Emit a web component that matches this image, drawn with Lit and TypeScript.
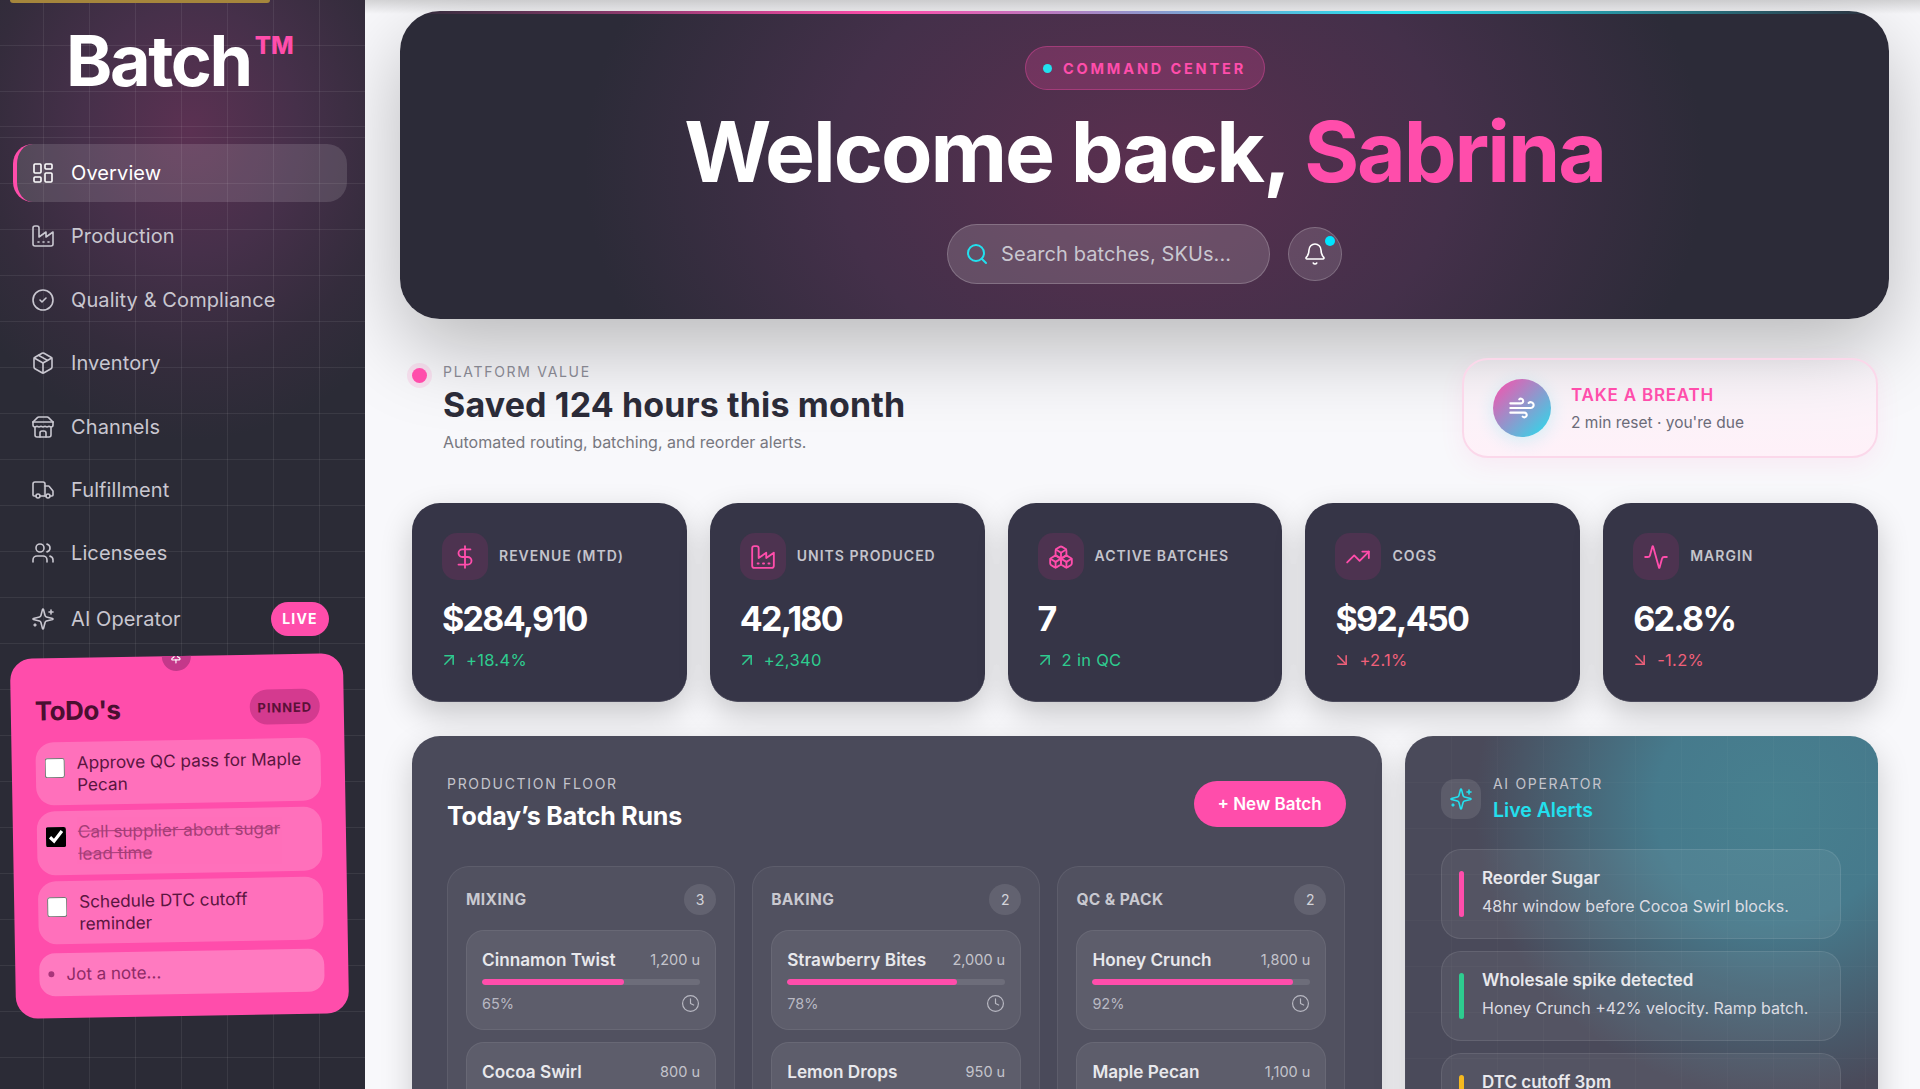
import { LitElement, html, css, svg } from "lit";
import { customElement } from "lit/decorators.js";

const I: Record<string, any> = {
  dash: svg`<rect x="3" y="3" width="7" height="9" rx="1"/><rect x="14" y="3" width="7" height="5" rx="1"/><rect x="14" y="12" width="7" height="9" rx="1"/><rect x="3" y="16" width="7" height="5" rx="1"/>`,
  factory: svg`<path d="M2 20a2 2 0 0 0 2 2h16a2 2 0 0 0 2-2V8l-7 5V8l-7 5V4a2 2 0 0 0-2-2H4a2 2 0 0 0-2 2Z"/><path d="M17 18h1"/><path d="M12 18h1"/><path d="M7 18h1"/>`,
  check: svg`<circle cx="12" cy="12" r="10"/><path d="m9 12 2 2 4-4"/>`,
  box: svg`<path d="M21 8a2 2 0 0 0-1-1.73l-7-4a2 2 0 0 0-2 0l-7 4A2 2 0 0 0 3 8v8a2 2 0 0 0 1 1.73l7 4a2 2 0 0 0 2 0l7-4A2 2 0 0 0 21 16Z"/><path d="m3.3 7 8.7 5 8.7-5"/><path d="M12 22V12"/><path d="m7.5 4.27 9 5.15"/>`,
  store: svg`<path d="m2 7 4.41-4.41A2 2 0 0 1 7.83 2h8.34a2 2 0 0 1 1.42.59L22 7"/><path d="M4 12v8a2 2 0 0 0 2 2h12a2 2 0 0 0 2-2v-8"/><path d="M15 22v-4a2 2 0 0 0-2-2h-2a2 2 0 0 0-2 2v4"/><path d="M2 7h20"/><path d="M22 7v3a2 2 0 0 1-2 2a2.7 2.7 0 0 1-1.59-.63.7.7 0 0 0-.82 0A2.7 2.7 0 0 1 16 12a2.7 2.7 0 0 1-1.59-.63.7.7 0 0 0-.82 0A2.7 2.7 0 0 1 12 12a2.7 2.7 0 0 1-1.59-.63.7.7 0 0 0-.82 0A2.7 2.7 0 0 1 8 12a2.7 2.7 0 0 1-1.59-.63.7.7 0 0 0-.82 0A2.7 2.7 0 0 1 4 12a2 2 0 0 1-2-2V7"/>`,
  truck: svg`<path d="M14 18V6a2 2 0 0 0-2-2H4a2 2 0 0 0-2 2v11a1 1 0 0 0 1 1h2"/><path d="M15 18H9"/><path d="M19 18h2a1 1 0 0 0 1-1v-3.65a1 1 0 0 0-.22-.624l-3.48-4.35A1 1 0 0 0 17.52 8H14"/><circle cx="17" cy="18" r="2"/><circle cx="7" cy="18" r="2"/>`,
  users: svg`<path d="M16 21v-2a4 4 0 0 0-4-4H6a4 4 0 0 0-4 4v2"/><circle cx="9" cy="7" r="4"/><path d="M22 21v-2a4 4 0 0 0-3-3.87"/><path d="M16 3.13a4 4 0 0 1 0 7.75"/>`,
  spark: svg`<path d="M9.937 15.5A2 2 0 0 0 8.5 14.063l-6.135-1.582a.5.5 0 0 1 0-.962L8.5 9.936A2 2 0 0 0 9.937 8.5l1.582-6.135a.5.5 0 0 1 .963 0L14.063 8.5A2 2 0 0 0 15.5 9.937l6.135 1.581a.5.5 0 0 1 0 .964L15.5 14.063a2 2 0 0 0-1.437 1.437l-1.582 6.135a.5.5 0 0 1-.963 0z"/><path d="M20 3v4"/><path d="M22 5h-4"/><path d="M4 17v2"/><path d="M5 18H3"/>`,
  search: svg`<circle cx="11" cy="11" r="8"/><path d="m21 21-4.3-4.3"/>`,
  bell: svg`<path d="M10.268 21a2 2 0 0 0 3.464 0"/><path d="M3.262 15.326A1 1 0 0 0 4 17h16a1 1 0 0 0 .74-1.673C19.41 13.956 18 12.499 18 8A6 6 0 0 0 6 8c0 4.499-1.411 5.956-2.738 7.326"/>`,
  wind: svg`<path d="M17.7 7.7a2.5 2.5 0 1 1 1.8 4.3H2"/><path d="M9.6 4.6A2 2 0 1 1 11 8H2"/><path d="M12.6 19.4A2 2 0 1 0 14 16H2"/>`,
  dollar: svg`<line x1="12" x2="12" y1="2" y2="22"/><path d="M17 5H9.5a3.5 3.5 0 0 0 0 7h5a3.5 3.5 0 0 1 0 7H6"/>`,
  boxes: svg`<path d="M2.97 12.92A2 2 0 0 0 2 14.63v3.24a2 2 0 0 0 .97 1.71l3 1.8a2 2 0 0 0 2.06 0L12 19v-5.5l-5-3-4.03 2.42Z"/><path d="m7 16.5-4.74-2.85"/><path d="m7 16.5 5-3"/><path d="M7 16.5v5.17"/><path d="M12 13.5V19l3.97 2.38a2 2 0 0 0 2.06 0l3-1.8a2 2 0 0 0 .97-1.71v-3.24a2 2 0 0 0-.97-1.71L17 10.5l-5 3Z"/><path d="m17 16.5-5-3"/><path d="m17 16.5 4.74-2.85"/><path d="M17 16.5v5.17"/><path d="M7.97 4.42A2 2 0 0 0 7 6.13v4.37l5 3 5-3V6.13a2 2 0 0 0-.97-1.71l-3-1.8a2 2 0 0 0-2.06 0l-3 1.8Z"/><path d="M12 8 7.26 5.15"/><path d="m12 8 4.74-2.85"/><path d="M12 13.5V8"/>`,
  trend: svg`<path d="M16 7h6v6"/><path d="m22 7-8.5 8.5-5-5L2 17"/>`,
  activity: svg`<path d="M22 12h-2.48a2 2 0 0 0-1.93 1.46l-2.35 8.36a.25.25 0 0 1-.48 0L9.24 2.18a.25.25 0 0 0-.48 0l-2.35 8.36A2 2 0 0 1 4.49 12H2"/>`,
  up: svg`<path d="M7 7h10v10"/><path d="M7 17 17 7"/>`,
  down: svg`<path d="m7 7 10 10"/><path d="M17 7v10H7"/>`,
  clock: svg`<circle cx="12" cy="12" r="10"/><polyline points="12 6 12 12 16 14"/>`,
  pin: svg`<path d="M12 17v5"/><path d="M9 10.76a2 2 0 0 1-1.11 1.79l-1.78.9A2 2 0 0 0 5 15.24V16a1 1 0 0 0 1 1h12a1 1 0 0 0 1-1v-.76a2 2 0 0 0-1.11-1.79l-1.78-.9A2 2 0 0 1 15 10.76V7a1 1 0 0 1 1-1 2 2 0 0 0 0-4H8a2 2 0 0 0 0 4 1 1 0 0 1 1 1z"/>`,
};
const icon = (n: string, c = "ic") => html`<svg class=${c} viewBox="0 0 24 24" fill="none" stroke="currentColor" stroke-linecap="round" stroke-linejoin="round">${I[n]}</svg>`;

const NAV = [
  ["dash", "Overview"], ["factory", "Production"], ["check", "Quality & Compliance"], ["box", "Inventory"],
  ["store", "Channels"], ["truck", "Fulfillment"], ["users", "Licensees"], ["spark", "AI Operator"],
];
const STATS = [
  ["dollar", "REVENUE (MTD)", "$284,910", "+18.4%", true],
  ["factory", "UNITS PRODUCED", "42,180", "+2,340", true],
  ["boxes", "ACTIVE BATCHES", "7", "2 in QC", true],
  ["trend", "COGS", "$92,450", "+2.1%", false],
  ["activity", "MARGIN", "62.8%", "-1.2%", false],
] as const;
const COLS = [
  { t: "MIXING", n: 3, a: ["Cinnamon Twist", "1,200 u", 65], b: ["Cocoa Swirl", "800 u"] },
  { t: "BAKING", n: 2, a: ["Strawberry Bites", "2,000 u", 78], b: ["Lemon Drops", "950 u"] },
  { t: "QC & PACK", n: 2, a: ["Honey Crunch", "1,800 u", 92], b: ["Maple Pecan", "1,100 u"] },
] as const;
const ALERTS = [
  ["#ff4dab", "Reorder Sugar", "48hr window before Cocoa Swirl blocks."],
  ["#2ecc8f", "Wholesale spike detected", "Honey Crunch +42% velocity. Ramp batch."],
  ["#f5b91f", "DTC cutoff 3pm", ""],
];

@customElement("app-root")
export class AppRoot extends LitElement {
  static styles = css`
    :host { display: flex; width: 1920px; height: 1089px; overflow: hidden; background: #f8f8fb; font-family: Inter, "Liberation Sans", sans-serif; color: #2b2b38; }
    * { box-sizing: border-box; }
    .ic { width: 24px; height: 24px; stroke-width: 1.6; flex: none; display: block; }

    .side { width: 365px; flex: none; height: 1089px; position: relative; display: flex; flex-direction: column; color: #fff;
      background:
        linear-gradient(rgba(255,255,255,.07) 1px, transparent 1px) 0 -1px / 46px 46px,
        linear-gradient(90deg, rgba(255,255,255,.07) 1px, transparent 1px) -3px 0 / 46px 46px,
        radial-gradient(ellipse 270px 310px at 190px 130px, #5b3152 0%, #46304a 40%, #342c3c 75%, #2b2b36 100%), #2b2b36; }
    .strip { position: absolute; left: 10px; top: 0; width: 260px; height: 3px; background: #a5863c; border-radius: 0 0 4px 4px; }
    .logo { height: 127px; flex: none; padding-top: 21px; padding-left: 66px; font-size: 70px; line-height: 80px; font-weight: 700; letter-spacing: -2.4px; border-bottom: 1px solid rgba(255,255,255,.07); display: flex; align-items: flex-start; }
    .logo sup { font-size: 24px; line-height: 24px; color: #ff4dab; letter-spacing: 0; margin: 13px 0 0 4px; font-weight: 800; vertical-align: baseline; }
    nav { display: flex; flex-direction: column; gap: 5.4px; margin-top: 17px; padding: 0 18px 0 13px; }
    .item { height: 58px; display: flex; align-items: center; padding: 0 18px 0 18px; border-radius: 20px; font-size: 20px; letter-spacing: .1px; color: #c9c7d0; border-left: 4px solid transparent; gap: 16px; }
    .item .ic { margin-left: -4px; }
    .item.on { background: rgba(255,255,255,.13); color: #fff; border-left-color: #ff4dab; }
    .item.last { height: 62px; padding-right: 18px; }
    .live { margin-left: auto; width: 58px; height: 34px; border-radius: 17px; background: #ff4dab; color: #fff; font-size: 14px; font-weight: 700; letter-spacing: 1.2px; display: flex; align-items: center; justify-content: center; }

    .note { position: relative; overflow: hidden; width: 333px; height: 360px; margin: 6.5px 0 0 13px; transform: rotate(-1deg); background: #ff4dab; border-radius: 22px; padding: 35px 24px 0; color: #4a0f30; flex: none; }
    .pin { position: absolute; left: 151.5px; top: -14px; width: 29px; height: 29px; border-radius: 50%; background: #c4388a; color: #fff; display: flex; align-items: center; justify-content: center; }
    .pin .ic { width: 14px; height: 14px; stroke-width: 2; }
    .nh { height: 35px; display: flex; align-items: center; justify-content: space-between; margin-bottom: 13.5px; }
    .nh b { font-size: 26px; font-weight: 700; letter-spacing: -.5px; }
    .pinned { width: 70px; height: 35px; border-radius: 18px; background: #d43a8f; font-size: 13px; font-weight: 700; letter-spacing: .9px; display: flex; align-items: center; justify-content: center; color: #5a1138; }
    .todo { display: flex; gap: 12px; height: 63.5px; padding: 10px 9px; background: #ff70bb; border-radius: 18px; margin-bottom: 6px; font-size: 17.2px; line-height: 22.3px; color: #5a1540; }
    .todo input { width: 20px; height: 20px; margin: 6px 0 0; flex: none; accent-color: #000; }
    .todo.done span { text-decoration: line-through; opacity: .55; }
    .jot { height: 43px; margin-top: 8.5px; border-radius: 16px; background: #ff7ac0; display: flex; align-items: center; padding-left: 9px; gap: 12px; color: #8e2a66; font-size: 17px; }
    .jot i { width: 6px; height: 6px; border-radius: 50%; background: #a8357a; }

    main { flex: 1; min-width: 0; padding: 11px 42px 0 47px; background: linear-gradient(#d4d4d6, rgba(212,212,214,0) 14px); }
    .heroWrap { border-radius: 40px; margin: 0 -11px 0 -12px; box-shadow: 0 30px 80px rgba(0,0,0,.25); }
    .hero { position: relative; height: 308px; border-radius: 40px; overflow: hidden; text-align: center; display: flex; flex-direction: column; align-items: center; padding-top: 35px;
      background: radial-gradient(ellipse 560px 400px at 50% 50%, #5a2f4f 0%, #44304a 55%, #2c2b38 100%); color: #fff; }
    .hero::before { content: ""; position: absolute; left: 0; right: 0; top: 0; height: 3px; background: linear-gradient(90deg, transparent 0%, #ff4dab 33%, #22e0ee 67%, transparent 100%); }
    .chip { height: 44px; width: 240px; border-radius: 22px; background: rgba(255,77,171,.2); border: 1px solid rgba(255,77,171,.35); display: flex; align-items: center; justify-content: center; gap: 11px; color: #ff4dab; font-size: 14.5px; font-weight: 700; letter-spacing: 2.85px; }
    .chip i { width: 9px; height: 9px; border-radius: 50%; background: #22e0ee; }
    h1 { margin: 12px 0 0; font-size: 84px; line-height: 100px; font-weight: 700; letter-spacing: -2.1px; }
    h1 span { color: #ff4dab; }
    .tools { display: flex; align-items: center; gap: 18px; margin-top: 22px; }
    .search { width: 323px; height: 60px; border-radius: 30px; background: rgba(255,255,255,.15); border: 1px solid rgba(255,255,255,.2); display: flex; align-items: center; padding-left: 17px; gap: 12px; color: #c9c7d0; font-size: 20px; letter-spacing: .1px; }
    .search .ic { color: #22e0ee; stroke-width: 2; }
    .bell { position: relative; width: 54px; height: 54px; border-radius: 50%; background: rgba(255,255,255,.13); border: 1px solid rgba(255,255,255,.2); display: flex; align-items: center; justify-content: center; }
    .bell b { position: absolute; right: 6px; top: 8px; width: 10px; height: 10px; border-radius: 50%; background: #00e5ff; }

    .value { display: flex; justify-content: space-between; margin-top: 39px; height: 100px; }
    .vl { position: relative; padding: 5px 0 0 31px; }
    .vl > i { position: absolute; left: 0; top: 10px; width: 15px; height: 15px; border-radius: 50%; background: #ff4dab; box-shadow: 0 0 0 5px rgba(255,77,171,.13); }
    .eye { font-size: 14px; letter-spacing: 1.7px; line-height: 18px; color: #85858f; }
    .vl h2 { margin: 3px 0 0; font-size: 34px; line-height: 42px; font-weight: 700; letter-spacing: .15px; color: #2b2b38; }
    .vl p { margin: 6px 0 0; font-size: 16px; line-height: 20px; color: #77777f; }
    .breath { width: 416px; height: 100px; border-radius: 26px; border: 2px solid #fbd8ea; background: linear-gradient(180deg, rgba(255,200,230,.06), rgba(255,240,248,.85) 90%); box-shadow: 0 8px 24px rgba(255,77,171,.08); display: flex; align-items: center; padding-left: 29px; gap: 20px; }
    .circ { width: 58px; height: 58px; border-radius: 50%; background: linear-gradient(135deg, #ff4dab, #22e0ee); color: #fff; display: flex; align-items: center; justify-content: center; box-shadow: 0 4px 18px rgba(34,224,238,.2); }
    .circ .ic { width: 28px; height: 28px; stroke-width: 1.8; }
    .breath b { display: block; color: #ff4dab; font-size: 17px; font-weight: 600; letter-spacing: .8px; line-height: 22px; }
    .breath span { display: block; margin-top: 7px; font-size: 15.5px; color: #6b6b78; }

    .stats { display: grid; grid-template-columns: repeat(5, 1fr); gap: 23px; margin-top: 45px; }
    .stat { height: 199px; background: #363547; border-radius: 28px; padding: 30px; box-shadow: 0 12px 32px rgba(0,0,0,.2); border-bottom: 1px solid #4c4b5c; color: #fff; }
    .sh { display: flex; align-items: center; gap: 11px; height: 47px; }
    .si { width: 46px; height: 47px; border-radius: 15px; background: #4d3350; color: #ff4dab; display: flex; align-items: center; justify-content: center; }
    .si .ic { width: 26px; height: 26px; stroke-width: 1.7; }
    .sh span { font-size: 14px; font-weight: 600; letter-spacing: 1px; color: #c4c4cc; margin-bottom: 2px; }
    .sv { margin-top: 17px; font-size: 34px; line-height: 44px; font-weight: 700; letter-spacing: -1.7px; }
    .sd { display: flex; align-items: center; gap: 7px; height: 24px; margin-top: 7px; font-size: 16.5px; letter-spacing: .3px; }
    .sd .ic { width: 20px; height: 20px; stroke-width: 1.8; margin-left: -3px; }
    .sd.g { color: #2ecc8f; } .sd.r { color: #f0607a; }

    .floor { display: grid; grid-template-columns: 970px 473px; gap: 23px; margin-top: 34px; }
    .panel { height: 400px; border-radius: 28px; background: #4a4a5a; padding: 36px 35px; color: #fff; box-shadow: 0 12px 32px rgba(0,0,0,.18); }
    .ph { display: flex; justify-content: space-between; align-items: flex-start; height: 94px; }
    .panel .eye { color: #c4c4cc; line-height: 24px; }
    .ph h3 { margin: 3px 0 0; font-size: 25px; line-height: 34px; font-weight: 700; letter-spacing: -.2px; }
    .btn { margin: 9px 1.5px 0 0; width: 152px; height: 46px; border-radius: 23px; background: #ff4dab; display: flex; align-items: center; justify-content: center; font-size: 17px; font-weight: 600; }
    .cols { display: grid; grid-template-columns: 288px 288px 288px; gap: 17.2px; }
    .col { height: 300px; padding: 18px; border-radius: 22px; background: rgba(255,255,255,.04); border: 1px solid rgba(255,255,255,.07); }
    .ch { display: flex; align-items: center; justify-content: space-between; height: 31px; margin-bottom: 15px; margin-top: -1px; }
    .ch b { font-size: 15.5px; letter-spacing: .4px; font-weight: 700; color: #c9c9d0; }
    .ch span { width: 32px; height: 31px; border-radius: 50%; background: rgba(255,255,255,.1); font-size: 14px; color: #d4d4da; display: flex; align-items: center; justify-content: center; }
    .card { height: 100px; padding: 15px 15px 0; border-radius: 18px; margin-bottom: 12px; background: rgba(255,255,255,.07); border: 1px solid rgba(255,255,255,.07); }
    .cr { display: flex; justify-content: space-between; align-items: center; height: 26px; }
    .cr b { font-size: 17.2px; font-weight: 600; color: #e8e8ec; }
    .cr span { font-size: 14.5px; color: #c4c4cc; }
    .bar { height: 6px; margin-top: 7px; border-radius: 3px; background: rgba(255,255,255,.1); overflow: hidden; }
    .bar i { display: block; height: 100%; border-radius: 3px; background: #ff4dab; }
    .cf { display: flex; justify-content: space-between; align-items: center; margin-top: 9px; font-size: 14.5px; color: #b8b8c2; }
    .cf .ic { width: 19px; height: 19px; stroke-width: 1.5; }

    .alerts { background:
      linear-gradient(rgba(255,255,255,.018) 1px, transparent 1px) 0 0 / 46px 46px,
      linear-gradient(90deg, rgba(255,255,255,.018) 1px, transparent 1px) 0 0 / 46px 46px,
      radial-gradient(ellipse 300px 290px at 370px 70px, #47808f 0%, #467a8c 40%, #4a4a5a 100%), #4a4a5a; padding: 36px; }
    .ah { display: flex; gap: 12px; height: 77px; }
    .ai { width: 40px; height: 40px; margin-top: 7px; border-radius: 14px; background: rgba(255,255,255,.1); color: #22e0ee; display: flex; align-items: center; justify-content: center; }
    .ai .ic { width: 24px; height: 24px; }
    .ah h3 { margin: -1px 0 0; font-size: 19.5px; font-weight: 600; line-height: 30px; color: #22e0ee; }
    .al { height: 90px; width: 400px; margin-bottom: 12px; display: flex; gap: 18px; padding: 21px 17px; border-radius: 20px; background: rgba(255,255,255,.06); border: 1px solid rgba(255,255,255,.09); }
    .al > i { width: 5px; height: 46px; border-radius: 3px; flex: none; }
    .al > div { margin-top: -2.5px; }
    .al b { display: block; font-size: 17px; font-weight: 600; line-height: 18px; color: #e8e8ec; }
    .al span { display: block; margin-top: 10px; font-size: 16px; line-height: 18px; color: #dcdce2; }
  `;

  render() {
    return html`
      <aside class="side">
        <div class="strip"></div>
        <div class="logo">Batch<sup>TM</sup></div>
        <nav>
          ${NAV.map(([ic, t], i) => html`
            <div class="item ${i === 0 ? "on" : ""} ${i === 7 ? "last" : ""}">
              ${icon(ic)}<span>${t}</span>${i === 7 ? html`<span class="live">LIVE</span>` : ""}
            </div>`)}
        </nav>
        <div class="note">
          <div class="pin">${icon("pin")}</div>
          <div class="nh"><b>ToDo's</b><span class="pinned">PINNED</span></div>
          <label class="todo"><input type="checkbox" /><span>Approve QC pass for Maple Pecan</span></label>
          <label class="todo done"><input type="checkbox" checked /><span>Call supplier about sugar lead time</span></label>
          <label class="todo"><input type="checkbox" /><span>Schedule DTC cutoff reminder</span></label>
          <div class="jot"><i></i>Jot a note...</div>
        </div>
      </aside>
      <main>
        <div class="heroWrap">
          <section class="hero">
            <div class="chip"><i></i>COMMAND CENTER</div>
            <h1>Welcome back, <span>Sabrina</span></h1>
            <div class="tools">
              <div class="search">${icon("search")}Search batches, SKUs...</div>
              <div class="bell">${icon("bell")}<b></b></div>
            </div>
          </section>
        </div>
        <section class="value">
          <div class="vl"><i></i>
            <div class="eye">PLATFORM VALUE</div>
            <h2>Saved 124 hours this month</h2>
            <p>Automated routing, batching, and reorder alerts.</p>
          </div>
          <div class="breath">
            <div class="circ">${icon("wind")}</div>
            <div><b>TAKE A BREATH</b><span>2 min reset · you're due</span></div>
          </div>
        </section>
        <section class="stats">
          ${STATS.map(([ic, l, v, d, good]) => html`
            <div class="stat">
              <div class="sh"><div class="si">${icon(ic)}</div><span>${l}</span></div>
              <div class="sv">${v}</div>
              <div class="sd ${good ? "g" : "r"}">${icon(good ? "up" : "down")}${d}</div>
            </div>`)}
        </section>
        <section class="floor">
          <div class="panel">
            <div class="ph">
              <div><div class="eye">PRODUCTION FLOOR</div><h3>Today’s Batch Runs</h3></div>
              <div class="btn">+ New Batch</div>
            </div>
            <div class="cols">
              ${COLS.map((c) => html`
                <div class="col">
                  <div class="ch"><b>${c.t}</b><span>${c.n}</span></div>
                  <div class="card">
                    <div class="cr"><b>${c.a[0]}</b><span>${c.a[1]}</span></div>
                    <div class="bar"><i style="width:${c.a[2]}%"></i></div>
                    <div class="cf"><span>${c.a[2]}%</span>${icon("clock")}</div>
                  </div>
                  <div class="card">
                    <div class="cr"><b>${c.b[0]}</b><span>${c.b[1]}</span></div>
                  </div>
                </div>`)}
            </div>
          </div>
          <div class="panel alerts">
            <div class="ah">
              <div class="ai">${icon("spark")}</div>
              <div><div class="eye">AI OPERATOR</div><h3>Live Alerts</h3></div>
            </div>
            ${ALERTS.map(([c, t, d]) => html`
              <div class="al"><i style="background:${c}"></i><div><b>${t}</b>${d ? html`<span>${d}</span>` : ""}</div></div>`)}
          </div>
        </section>
      </main>
    `;
  }
}
